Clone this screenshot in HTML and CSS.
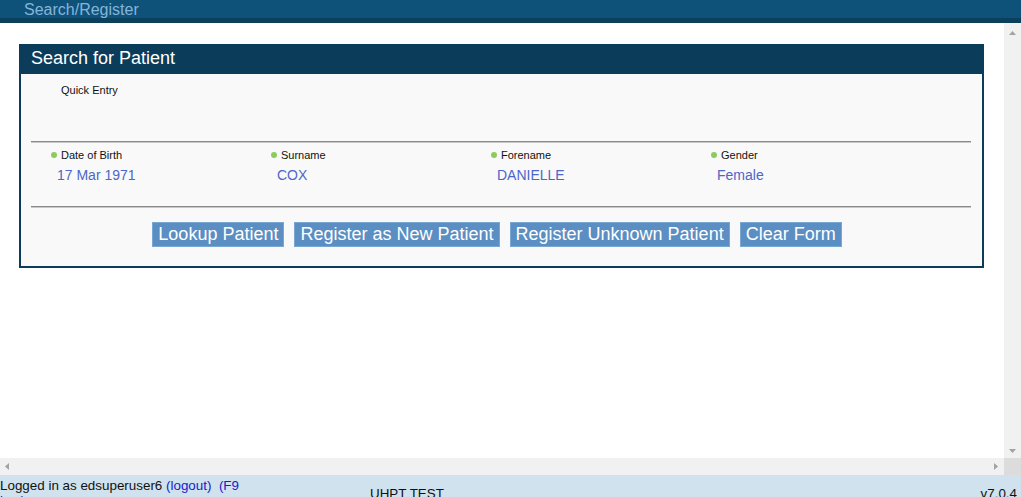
FILE: index.html
```html
<!DOCTYPE html>
<html>
<head>
<meta charset="utf-8">
<title>Search/Register</title>
<link rel="stylesheet" href="styles.css">
</head>
<body>
<div class="topbar"><span class="topbar-title">Search/Register</span></div>
<div class="frame">
  <div class="viewport">
    <div class="panel">
      <div class="panel-head">Search for Patient</div>
      <div class="panel-body">
        <div class="quick">Quick Entry</div>
        <div class="rule"></div>
        <div class="fields">
          <div class="field"><div class="label"><span class="dot"></span>Date of Birth</div><div class="value">17 Mar 1971</div></div>
          <div class="field"><div class="label"><span class="dot"></span>Surname</div><div class="value">COX</div></div>
          <div class="field"><div class="label"><span class="dot"></span>Forename</div><div class="value">DANIELLE</div></div>
          <div class="field"><div class="label"><span class="dot"></span>Gender</div><div class="value">Female</div></div>
        </div>
        <div class="rule"></div>
        <div class="buttons">
          <button class="btn">Lookup Patient</button>
          <button class="btn">Register as New Patient</button>
          <button class="btn">Register Unknown Patient</button>
          <button class="btn">Clear Form</button>
        </div>
      </div>
    </div>
  </div>
  <div class="vscroll">
    <svg class="arrow" width="7" height="4" viewBox="0 0 7 4"><polygon points="0,4 7,4 3.5,0" fill="#a3a3a3"/></svg>
    <svg class="arrow" width="7" height="4" viewBox="0 0 7 4"><polygon points="0,0 7,0 3.5,4" fill="#a3a3a3"/></svg>
  </div>
  <div class="hscroll">
    <svg class="arrow" width="4" height="7" viewBox="0 0 4 7"><polygon points="4,0 4,7 0,3.5" fill="#a3a3a3"/></svg>
    <svg class="arrow" width="4" height="7" viewBox="0 0 4 7"><polygon points="0,0 0,7 4,3.5" fill="#a3a3a3"/></svg>
  </div>
  <div class="corner"></div>
</div>
<div class="status">
  <div class="status-left">Logged in as edsuperuser6 <a class="link">(logout)</a>&nbsp; <a class="link">(F9 key)</a></div>
  <div class="status-mid">UHPT TEST</div>
  <div class="status-right">v7.0.4</div>
</div>
</body>
</html>
```
FILE: styles.css
```css
html, body {
  margin: 0;
  padding: 0;
  height: 497px;
  overflow: hidden;
  font-family: "Liberation Sans", Arial, sans-serif;
  background: #ffffff;
}

.topbar {
  height: 18px;
  background: #0f5279;
  border-bottom: 5px solid #0b3f5c;
  padding-left: 24px;
}

.topbar-title {
  color: #83b5dc;
  font-size: 16px;
  line-height: 19px;
}

.frame {
  height: 452px;
  display: grid;
  grid-template-columns: 1fr 17px;
  grid-template-rows: 1fr 17px;
}

.viewport {
  overflow: hidden;
  padding: 21px 20px 0 19px;
}

.panel {
  border: 2px solid #0b3d5a;
  background: #f9f9f9;
}

.panel-head {
  background: #0b3d5a;
  color: #ffffff;
  font-size: 18px;
  height: 28px;
  line-height: 25px;
  padding-left: 10px;
}

.panel-body {
  padding: 10px 11px 19px 10px;
}

.quick {
  font-size: 11px;
  line-height: 12px;
  color: #111;
  padding-left: 30px;
  height: 57px;
}

.rule {
  border-top: 1px solid #8a8a8a;
  height: 1px;
  background: #c8c8c8;
}

.fields {
  display: flex;
  padding: 5px 0 0 20px;
  height: 63px;
  box-sizing: border-box;
}

.field {
  width: 220px;
}

.label {
  font-size: 11px;
  line-height: 14px;
  color: #111;
  display: flex;
  align-items: center;
}

.dot {
  width: 6px;
  height: 6px;
  border-radius: 50%;
  background: #8dcc5c;
  margin-right: 4px;
}

.value {
  font-size: 14px;
  line-height: 18px;
  color: #4d66c9;
  padding-left: 6px;
  margin-top: 4px;
}

.buttons {
  display: flex;
  justify-content: center;
  gap: 10px;
  padding: 14px 8px 0 0;
}

.btn {
  font-family: "Liberation Sans", Arial, sans-serif;
  font-size: 18px;
  color: #ffffff;
  background: #5b8ec2;
  border: 1px solid #7aa6d2;
  height: 25px;
  padding: 0 5px;
  line-height: 23px;
  margin: 0;
}

.vscroll {
  background: #f1f1f1;
  display: flex;
  flex-direction: column;
  justify-content: space-between;
  align-items: center;
  padding: 8px 0 5px;
}

.hscroll {
  background: #f1f1f1;
  display: flex;
  justify-content: space-between;
  align-items: center;
  padding: 0 6px 0 5px;
}

.arrow {
  display: block;
}

.corner {
  background: #dcdcdc;
}

.status {
  background: #cfe2ee;
  height: 22px;
  display: flex;
  align-items: flex-start;
  font-size: 13.4px;
  line-height: 15px;
  color: #111;
  padding-top: 3px;
  box-sizing: border-box;
}

.status-left {
  width: 245px;
}

.status-mid {
  margin-left: 125px;
  padding-top: 8px;
  flex: 1;
}

.status-right {
  padding-top: 8px;
  padding-right: 4px;
}

.link {
  color: #1a1acc;
}
```
